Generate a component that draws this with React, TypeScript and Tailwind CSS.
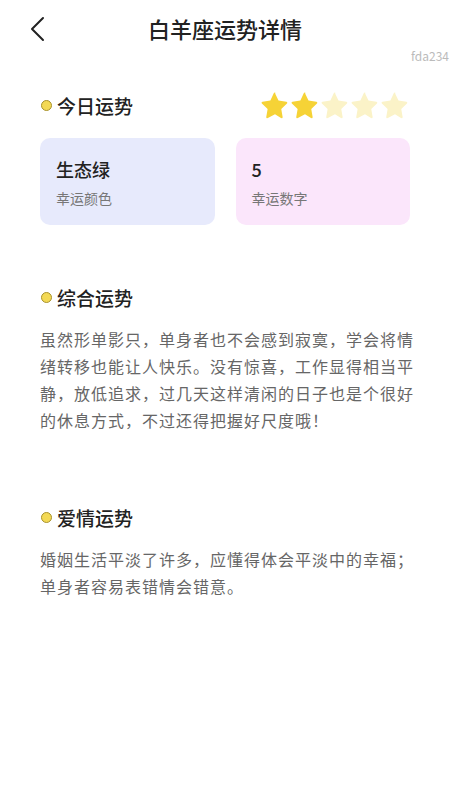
const font = { fontFamily: '"Noto Sans CJK SC", "Noto Sans", sans-serif' };

function Star({ on }: { on: boolean }) {
  return (
    <svg viewBox="0 0 24 24" className="h-[30px] w-[30px]">
      <path
        d="M12 2.6l2.8 5.8 6.3.9c.7.1 1 1 .5 1.5l-4.6 4.4 1.1 6.3c.1.7-.6 1.3-1.3.9L12 19.4l-5.7 3c-.6.4-1.4-.2-1.3-.9l1.1-6.3-4.6-4.4c-.5-.5-.2-1.4.5-1.5l6.3-.9L11 2.6c.3-.7 1.3-.7 1.6 0z"
        fill={on ? "#f6d336" : "#fbf3c8"}
      />
    </svg>
  );
}

function Heading({ title }: { title: string }) {
  return (
    <div className="flex items-center gap-[5px]">
      <span className="ml-[1px] h-[11px] w-[11px] rounded-full border-[1.5px] border-[#a8922c] bg-[#f3d955]" />
      <span className="text-[19px] font-medium leading-none text-[#222]">{title}</span>
    </div>
  );
}

export default function App() {
  return (
    <div className="min-h-[800px] w-[450px] bg-white" style={font}>
      <div className="relative flex h-[50px] items-center justify-center pt-[6px]">
        <svg viewBox="0 0 16 26" className="absolute left-[29px] top-[16px] h-[26px] w-[16px]">
          <path d="M14 2 L3 13 L14 24" fill="none" stroke="#222" strokeWidth={2} strokeLinecap="round" strokeLinejoin="round" />
        </svg>
        <h1 className="text-[22px] font-medium leading-none text-[#222]">白羊座运势详情</h1>
      </div>
      <div className="flex justify-end pr-[1px] text-[12px] leading-none text-[#bbb]">fda234</div>

      <div className="px-[40px]">
        <div className="mt-[28px] flex items-center justify-between">
          <Heading title="今日运势" />
          <div className="flex">
            <Star on />
            <Star on />
            <Star on={false} />
            <Star on={false} />
            <Star on={false} />
          </div>
        </div>

        <div className="mt-[18px] grid grid-cols-2 gap-[21px]">
          <div className="h-[87px] rounded-[10px] bg-[#e7eafc] px-[16px] pt-[22px]">
            <div className="text-[18px] font-medium leading-none text-[#222]">生态绿</div>
            <div className="mt-[13px] text-[14px] leading-none text-[#777]">幸运颜色</div>
          </div>
          <div className="h-[87px] rounded-[10px] bg-[#fbe6fb] px-[16px] pt-[22px]">
            <div className="text-[18px] font-medium leading-none text-[#222]">5</div>
            <div className="mt-[13px] text-[14px] leading-none text-[#777]">幸运数字</div>
          </div>
        </div>

        <div className="mt-[63px]">
          <Heading title="综合运势" />
          <p className="mr-[-8px] mt-[19px] text-[16px] leading-[27px] tracking-[1px] text-[#666]">
            虽然形单影只，单身者也不会感到寂寞，学会将情绪转移也能让人快乐。没有惊喜，工作显得相当平静，放低追求，过几天这样清闲的日子也是个很好的休息方式，不过还得把握好尺度哦！
          </p>
        </div>

        <div className="mt-[74px]">
          <Heading title="爱情运势" />
          <p className="mr-[-8px] mt-[19px] text-[16px] leading-[27px] tracking-[1px] text-[#666]">
            婚姻生活平淡了许多，应懂得体会平淡中的幸福；单身者容易表错情会错意。
          </p>
        </div>
      </div>
    </div>
  );
}
